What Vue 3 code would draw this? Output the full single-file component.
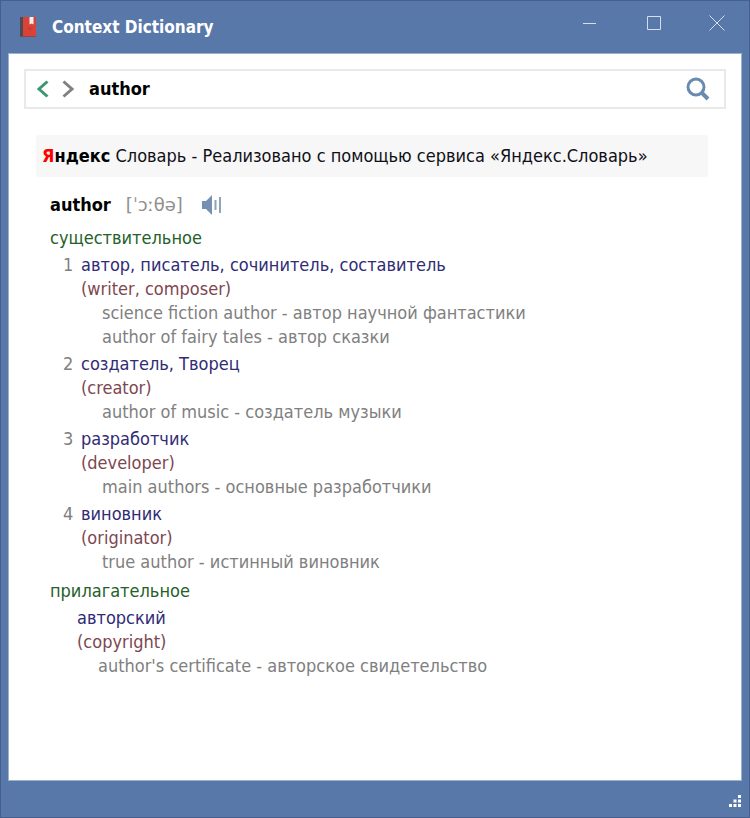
<script setup>
import { ref } from 'vue'

const query = ref('author')

const sections = [
  {
    part: 'существительное',
    senses: [
      {
        words: 'автор, писатель, сочинитель, составитель',
        hint: '(writer, composer)',
        examples: ['science fiction author - автор научной фантастики', 'author of fairy tales - автор сказки'],
      },
      { words: 'создатель, Творец', hint: '(creator)', examples: ['author of music - создатель музыки'] },
      { words: 'разработчик', hint: '(developer)', examples: ['main authors - основные разработчики'] },
      { words: 'виновник', hint: '(originator)', examples: ['true author - истинный виновник'] },
    ],
  },
  {
    part: 'прилагательное',
    senses: [
      { words: 'авторский', hint: '(copyright)', examples: ["author's certificate - авторское свидетельство"] },
    ],
  },
]
</script>

<template>
  <div class="window">
    <header class="titlebar">
      <svg class="book" width="18" height="20" viewBox="0 0 18 20" aria-hidden="true">
        <path d="M1 0h3v20H2a1 1 0 0 1-1-1z" fill="#4b4a55" />
        <path d="M4 0h13v19a1 1 0 0 1-1 1H4z" fill="#d94336" />
        <path d="M2 19h15a1 1 0 0 1-1 1H3a1 1 0 0 1-1-1z" fill="#8f4450" />
        <path d="M10.500 0h4v7.500l-2-1-2 1z" fill="#f3efee" />
        <path d="M8 10.500h6l-3 3.500z" fill="#cb3a30" />
      </svg>
      <h1 class="title">Context Dictionary</h1>
      <div class="controls">
        <button class="control" type="button" aria-label="Minimize">
          <svg width="16" height="16" viewBox="0 0 16 16"><path d="M2 8.500h13" /></svg>
        </button>
        <button class="control" type="button" aria-label="Maximize">
          <svg width="16" height="16" viewBox="0 0 16 16"><path d="M2.500 1.500h13v13h-13z" /></svg>
        </button>
        <button class="control" type="button" aria-label="Close">
          <svg width="16" height="16" viewBox="0 0 16 16"><path d="M.5.5l15 15M15.500.5l-15 15" /></svg>
        </button>
      </div>
    </header>

    <main class="content">
      <form class="search" @submit.prevent>
        <button class="nav back" type="button" aria-label="Back">
          <svg width="12" height="18" viewBox="0 0 12 18"><path d="M10.500 1.500L2 9l8.500 7.500" /></svg>
        </button>
        <button class="nav forward" type="button" aria-label="Forward">
          <svg width="12" height="18" viewBox="0 0 12 18"><path d="M1.500 1.500L10 9l-8.500 7.500" /></svg>
        </button>
        <input v-model="query" class="query" type="text" aria-label="Word" />
        <button class="find" type="submit" aria-label="Search">
          <svg width="24" height="24" viewBox="0 0 24 24">
            <circle cx="10" cy="10" r="8" />
            <path d="M16 16l6 6" stroke-width="4" />
          </svg>
        </button>
      </form>

      <p class="source"><b><span class="ya">Я</span>ндекс</b> Словарь - Реализовано с помощью сервиса «Яндекс.Словарь»</p>

      <article class="entry">
        <div class="headword">
          <h2 class="word">author</h2>
          <span class="phonetic">[ˈɔːθə]</span>
          <button class="speak" type="button" aria-label="Listen">
            <svg width="22" height="20" viewBox="0 0 22 20">
              <path d="M1 6h4l6-6v20l-6-6H1z" fill="#7590b0" />
              <path d="M14.500 5v10" stroke="#8fa3bb" stroke-width="2" />
              <path d="M19 2v16" stroke="#8fa3bb" stroke-width="2" />
            </svg>
          </button>
        </div>

        <section v-for="section in sections" :key="section.part" class="section">
          <h3 class="part">{{ section.part }}</h3>
          <ol class="senses" :class="{ single: section.senses.length === 1 }">
            <li v-for="(sense, i) in section.senses" :key="sense.words" class="sense">
              <span v-if="section.senses.length > 1" class="number">{{ i + 1 }}</span>
              <div class="meaning">
                <p class="words">{{ sense.words }}</p>
                <p class="hint">{{ sense.hint }}</p>
                <p v-for="example in sense.examples" :key="example" class="example">{{ example }}</p>
              </div>
            </li>
          </ol>
        </section>
      </article>
    </main>

    <footer class="status">
      <svg width="12" height="12" viewBox="0 0 12 12" fill="#fff" aria-hidden="true">
        <path d="M9 0h3v3h-3zM9 4.500h3v3h-3zM9 9h3v3h-3zM4.500 4.500h3v3h-3zM4.500 9h3v3h-3zM0 9h3v3h-3z" />
      </svg>
    </footer>
  </div>
</template>

<style>
body {
  margin: 0;
}
</style>

<style scoped>
.window {
  box-sizing: border-box;
  display: flex;
  flex-direction: column;
  min-height: 100vh;
  padding: 0 7px;
  border: 1px solid #465f8e;
  background: #5978aa;
  font-family: "DejaVu Sans Condensed", "DejaVu Sans", sans-serif;
  font-size: 18px;
  line-height: 24px;
}

h1, h2, h3, p, ol {
  margin: 0;
  padding: 0;
  font-size: inherit;
}

button {
  display: flex;
  align-items: center;
  justify-content: center;
  padding: 0;
  border: 0;
  background: none;
}

.titlebar {
  display: flex;
  align-items: center;
  height: 52px;
  padding-left: 11px;
}

.title {
  flex: 1;
  margin-left: 15px;
  color: #fff;
  font-size: 17px;
}

.controls {
  display: flex;
  align-self: flex-start;
}

.control {
  width: 64px;
  height: 44px;
}

.control:last-child {
  margin-right: -7px;
}

.control svg {
  fill: none;
  stroke: #d5deeb;
}

.content {
  flex: 1;
  padding: 15px;
  border: 1px solid #9fb0cd;
  background: #fff;
}

.search {
  display: flex;
  align-items: center;
  height: 36px;
  padding: 0 14px 0 11px;
  border: 2px solid #e9e9e9;
}

.nav {
  width: 12px;
  height: 24px;
}

.nav svg, .find svg {
  fill: none;
  stroke-width: 3;
}

.back svg {
  stroke: #3f9673;
}

.forward {
  margin-left: 13px;
}

.forward svg {
  stroke: #808080;
}

.query {
  flex: 1;
  min-width: 0;
  margin-left: 15px;
  padding: 0;
  border: 0;
  outline: 0;
  color: #000;
  background: none;
  font: inherit;
  font-weight: bold;
}

.find svg {
  stroke: #6a8bb0;
}

.source {
  margin: 26px 18px 0 12px;
  padding: 9px 6px;
  border-radius: 3px;
  color: #101018;
  background: #f7f7f7;
}

.source b {
  color: #000;
}

.source .ya {
  color: #f00;
}

.entry {
  padding: 16px 26px 0;
}

.headword {
  display: flex;
  align-items: center;
  margin-bottom: 9px;
}

.word {
  color: #000;
}

.phonetic {
  margin-left: 15px;
  color: #909090;
  font-family: "DejaVu Sans", sans-serif;
}

.speak {
  margin-left: 18px;
}

.section + .section {
  margin-top: 5px;
}

.part {
  color: #25602a;
  font-weight: normal;
}

.senses {
  display: grid;
  gap: 3px;
  margin-top: 3px;
  padding-left: 13px;
  list-style: none;
}

.single {
  padding-left: 27px;
}

.sense {
  display: flex;
}

.number {
  width: 18px;
  color: #808080;
}

.words {
  color: #302c75;
}

.hint {
  color: #7d4750;
}

.example {
  padding-left: 21px;
  color: #808080;
}

.status {
  box-sizing: border-box;
  display: flex;
  align-items: center;
  justify-content: flex-end;
  height: 36px;
  padding: 4px 1px 0 0;
}
</style>
